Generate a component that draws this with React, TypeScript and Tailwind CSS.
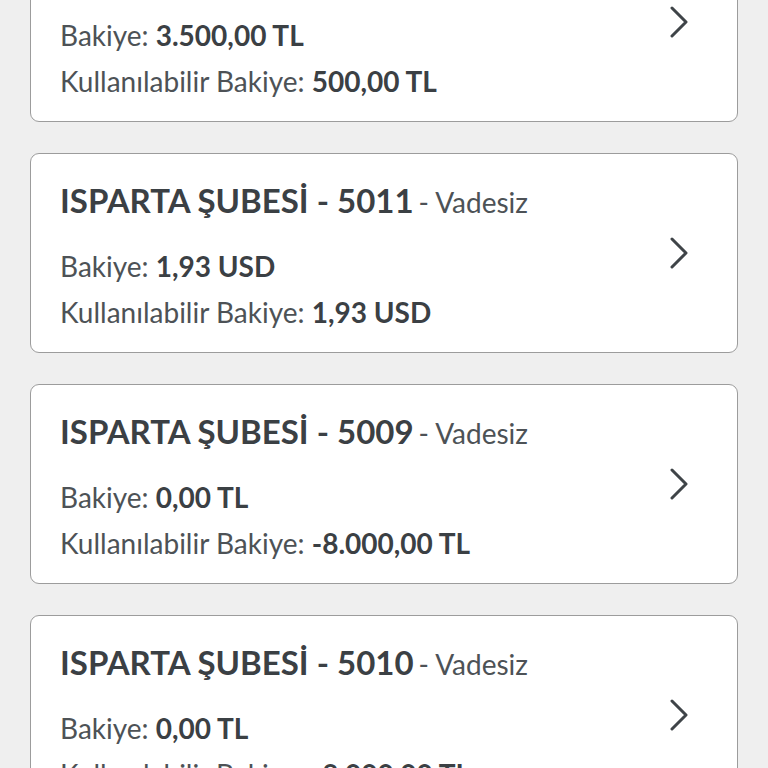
const accounts = [
  { branch: "ISPARTA ŞUBESİ", no: "5012", balance: "3.500,00 TL", available: "500,00 TL" },
  { branch: "ISPARTA ŞUBESİ", no: "5011", balance: "1,93 USD", available: "1,93 USD" },
  { branch: "ISPARTA ŞUBESİ", no: "5009", balance: "0,00 TL", available: "-8.000,00 TL" },
  { branch: "ISPARTA ŞUBESİ", no: "5010", balance: "0,00 TL", available: "-8.000,00 TL" },
];

export default function App() {
  return (
    <div className="h-[768px] w-[768px] overflow-hidden bg-[#efefef] font-['Lato',sans-serif]">
      <div className="-mt-[78px] flex flex-col gap-[31px] px-[30px]">
        {accounts.map((a) => (
          <AccountCard key={a.no} {...a} />
        ))}
      </div>
    </div>
  );
}

function AccountCard({
  branch,
  no,
  balance,
  available,
}: {
  branch: string;
  no: string;
  balance: string;
  available: string;
}) {
  return (
    <div className="relative h-[200px] rounded-[9px] border border-[#9c9c9c] bg-white pl-[29px] pr-[48px] pt-[26px]">
      <div className="flex items-baseline leading-[40px] text-[#3b4044]">
        <span className="text-[33px] font-bold">
          {branch} - {no}
        </span>
        <span className="ml-[5px] text-[28px] text-[#4d5256]">- Vadesiz</span>
      </div>
      <div className="mt-[21px] text-[28px] leading-[46px] text-[#4d5256]">
        <p>
          Bakiye: <span className="font-bold text-[#3b4044]">{balance}</span>
        </p>
        <p>
          Kullanılabilir Bakiye: <span className="font-bold text-[#3b4044]">{available}</span>
        </p>
      </div>
      <ChevronIcon className="absolute right-[48px] top-1/2 h-[32px] w-[20px] -translate-y-1/2 text-[#3f4448]" />
    </div>
  );
}

function ChevronIcon({ className }: { className?: string }) {
  return (
    <svg viewBox="0 0 20 32" fill="none" stroke="currentColor" strokeWidth="3" strokeLinecap="round" strokeLinejoin="round" className={className} aria-hidden="true">
      <path d="M3 2 L17 16 L3 30" />
    </svg>
  );
}
